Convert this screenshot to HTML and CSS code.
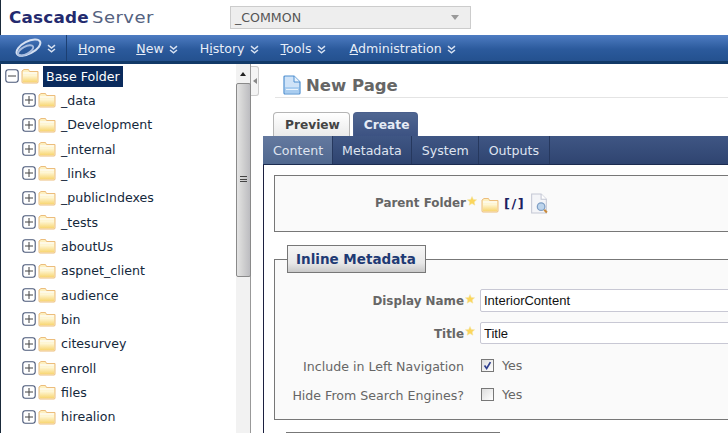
FILE: index.html
```html
<!DOCTYPE html>
<html lang="en">
<head>
<meta charset="utf-8">
<title>Cascade Server</title>
<link rel="stylesheet" href="styles.css">
</head>
<body>
<svg class="defs" width="0" height="0" aria-hidden="true">
  <defs>
    <linearGradient id="fg" x1="0" y1="0" x2="0" y2="1">
      <stop offset="0" stop-color="#fffbe4"/>
      <stop offset="1" stop-color="#f8d673"/>
    </linearGradient>
    <symbol id="folder" viewBox="0 0 18 16">
      <path d="M1 3 V14 a1 1 0 0 0 1 1 H16 a1 1 0 0 0 1-1 V3.5 H8.5 L7.5 1.5 H3 L1 3Z" fill="#fdf0c0" stroke="#ecbd7c" stroke-width="1"/>
      <path d="M2 6.5 H16 V14 H2Z" fill="url(#fg)"/>
      <path d="M2 5 H16" stroke="#fff" stroke-width="1.2"/>
    </symbol>
    <symbol id="plus" viewBox="0 0 14 14">
      <rect x=".8" y=".8" width="12.4" height="12.4" rx="2.5" fill="#fff" stroke="#4a5878" stroke-width="1.1"/>
      <path d="M3 7 H11 M7 3 V11" stroke="#444" stroke-width="1"/>
    </symbol>
    <symbol id="minus" viewBox="0 0 14 14">
      <rect x=".8" y=".8" width="12.4" height="12.4" rx="2.5" fill="#fff" stroke="#4a5878" stroke-width="1.1"/>
      <path d="M3 7 H11" stroke="#444" stroke-width="1"/>
    </symbol>
    <symbol id="star" viewBox="0 0 10 10">
      <path d="M5 .5 6.3 3.4 9.6 3.8 7.2 5.9 7.9 9.2 5 7.5 2.1 9.2 2.8 5.9 .4 3.8 3.7 3.4Z" fill="#fbd65c" stroke="#f3e2a0" stroke-width=".5"/>
    </symbol>
    <symbol id="chev" viewBox="0 0 9 9">
      <path d="M1 1.2 4.5 4 8 1.2 M1 5 4.5 7.8 8 5" fill="none" stroke="#d8e2f2" stroke-width="1.5"/>
    </symbol>
  </defs>
</svg>

<header class="top">
  <div class="logo"><span class="logo-a">Cascade</span><span class="logo-b">Server</span></div>
  <div class="site-select"><span>_COMMON</span><i class="select-arrow"></i></div>
</header>

<nav class="nav">
  <div class="nav-brand">
    <svg class="swirl" viewBox="0 0 30 22" aria-hidden="true">
      <ellipse cx="15.5" cy="10" rx="14" ry="6.5" transform="rotate(-28 15.5 10)" fill="none" stroke="#d6e1f2" stroke-width="2.2"/>
      <ellipse cx="12.5" cy="13" rx="9" ry="4" transform="rotate(-28 12.5 13)" fill="none" stroke="#a8bddf" stroke-width="2"/>
    </svg>
    <svg class="chev" aria-hidden="true"><use href="#chev"/></svg>
  </div>
  <a class="nav-item home"><u>H</u>ome</a>
  <a class="nav-item"><u>N</u>ew <svg class="chev" aria-hidden="true"><use href="#chev"/></svg></a>
  <a class="nav-item">H<u>i</u>story <svg class="chev" aria-hidden="true"><use href="#chev"/></svg></a>
  <a class="nav-item tools"><u>T</u>ools <svg class="chev" aria-hidden="true"><use href="#chev"/></svg></a>
  <a class="nav-item"><u>A</u>dministration <svg class="chev" aria-hidden="true"><use href="#chev"/></svg></a>
</nav>

<div class="main">
  <aside class="tree">
    <div class="row root"><svg class="box" aria-hidden="true"><use href="#minus"/></svg><svg class="folder" aria-hidden="true"><use href="#folder"/></svg><span class="name selected">Base Folder</span></div>
    <div class="row"><svg class="box" aria-hidden="true"><use href="#plus"/></svg><svg class="folder" aria-hidden="true"><use href="#folder"/></svg><span class="name">_data</span></div>
    <div class="row"><svg class="box" aria-hidden="true"><use href="#plus"/></svg><svg class="folder" aria-hidden="true"><use href="#folder"/></svg><span class="name">_Development</span></div>
    <div class="row"><svg class="box" aria-hidden="true"><use href="#plus"/></svg><svg class="folder" aria-hidden="true"><use href="#folder"/></svg><span class="name">_internal</span></div>
    <div class="row"><svg class="box" aria-hidden="true"><use href="#plus"/></svg><svg class="folder" aria-hidden="true"><use href="#folder"/></svg><span class="name">_links</span></div>
    <div class="row"><svg class="box" aria-hidden="true"><use href="#plus"/></svg><svg class="folder" aria-hidden="true"><use href="#folder"/></svg><span class="name">_publicIndexes</span></div>
    <div class="row"><svg class="box" aria-hidden="true"><use href="#plus"/></svg><svg class="folder" aria-hidden="true"><use href="#folder"/></svg><span class="name">_tests</span></div>
    <div class="row"><svg class="box" aria-hidden="true"><use href="#plus"/></svg><svg class="folder" aria-hidden="true"><use href="#folder"/></svg><span class="name">aboutUs</span></div>
    <div class="row"><svg class="box" aria-hidden="true"><use href="#plus"/></svg><svg class="folder" aria-hidden="true"><use href="#folder"/></svg><span class="name">aspnet_client</span></div>
    <div class="row"><svg class="box" aria-hidden="true"><use href="#plus"/></svg><svg class="folder" aria-hidden="true"><use href="#folder"/></svg><span class="name">audience</span></div>
    <div class="row"><svg class="box" aria-hidden="true"><use href="#plus"/></svg><svg class="folder" aria-hidden="true"><use href="#folder"/></svg><span class="name">bin</span></div>
    <div class="row"><svg class="box" aria-hidden="true"><use href="#plus"/></svg><svg class="folder" aria-hidden="true"><use href="#folder"/></svg><span class="name">citesurvey</span></div>
    <div class="row"><svg class="box" aria-hidden="true"><use href="#plus"/></svg><svg class="folder" aria-hidden="true"><use href="#folder"/></svg><span class="name">enroll</span></div>
    <div class="row"><svg class="box" aria-hidden="true"><use href="#plus"/></svg><svg class="folder" aria-hidden="true"><use href="#folder"/></svg><span class="name">files</span></div>
    <div class="row"><svg class="box" aria-hidden="true"><use href="#plus"/></svg><svg class="folder" aria-hidden="true"><use href="#folder"/></svg><span class="name">hirealion</span></div>
  </aside>

  <div class="scrollbar">
    <div class="sb-btn"><i class="sb-up"></i></div>
    <div class="sb-thumb"><i class="grip"></i></div>
  </div>

  <div class="splitter"><div class="handle"><i class="handle-arrow"></i></div></div>

  <section class="content">
    <div class="page-title">
      <svg class="page-icon" viewBox="0 0 18 20" aria-hidden="true">
        <path d="M1 2 a1 1 0 0 1 1-1 H11 L17 7 V18 a1 1 0 0 1-1 1 H2 a1 1 0 0 1-1-1Z" fill="#cfe3f8" stroke="#4f8fd0" stroke-width="1.2"/>
        <path d="M11 1 V7 H17" fill="#eaf3fc" stroke="#4f8fd0" stroke-width="1"/>
        <path d="M2 12 H16 V18 H2Z" fill="#a9cdf0"/>
        <path d="M3 14.5 H15" stroke="#eaf3fc"/>
      </svg>
      <h1>New Page</h1>
    </div>

    <div class="tabs">
      <a class="tab">Preview</a>
      <a class="tab active">Create</a>
    </div>

    <div class="subtabs">
      <a class="subtab on">Content</a>
      <a class="subtab">Metadata</a>
      <a class="subtab">System</a>
      <a class="subtab">Outputs</a>
    </div>

    <div class="panel">
      <div class="box-plain">
        <div class="pf-line">
          <span class="label strong">Parent Folder</span>
          <svg class="star" aria-hidden="true"><use href="#star"/></svg>
          <svg class="folder pf-folder" aria-hidden="true"><use href="#folder"/></svg>
          <span class="path">[/]</span>
          <svg class="browse" viewBox="0 0 18 20" aria-hidden="true">
            <path d="M2 1 H11 L16 6 V19 H2Z" fill="#f4f5f8" stroke="#c4c8d4"/>
            <path d="M11 1 V6 H16" fill="#fff" stroke="#c4c8d4"/>
            <circle cx="11" cy="13" r="3.6" fill="#bcd4ec" stroke="#7f9fc4" stroke-width="1.2"/>
            <path d="M14 16 16.5 18.5" stroke="#c98a3a" stroke-width="2"/>
          </svg>
        </div>
      </div>

      <div class="group">
        <div class="legend">Inline Metadata</div>
        <div class="form-row r1">
          <span class="label-cell"><span class="label strong">Display Name</span></span>
          <svg class="star" aria-hidden="true"><use href="#star"/></svg>
          <input class="field" type="text" value="InteriorContent">
        </div>
        <div class="form-row r2">
          <span class="label-cell"><span class="label strong">Title</span></span>
          <svg class="star" aria-hidden="true"><use href="#star"/></svg>
          <input class="field" type="text" value="Title">
        </div>
        <div class="form-row r3">
          <span class="label-cell"><span class="label">Include in Left Navigation</span></span>
          <span class="star-gap"></span>
          <span class="check checked"><svg viewBox="0 0 13 13" aria-hidden="true"><path d="M3 6.5 5.5 10 10 2.5" fill="none" stroke="#2f3f8f" stroke-width="2"/></svg></span>
          <span class="yes">Yes</span>
        </div>
        <div class="form-row r4">
          <span class="label-cell"><span class="label">Hide From Search Engines?</span></span>
          <span class="star-gap"></span>
          <span class="check"></span>
          <span class="yes">Yes</span>
        </div>
      </div>

      <div class="next-legend"></div>
    </div>
  </section>
</div>
</body>
</html>
```
FILE: styles.css
```css
* { box-sizing: border-box; }
html, body { margin: 0; height: 100%; overflow: hidden; }
body {
  width: 728px; height: 433px; background: #fff; color: #333;
  font-family: "DejaVu Sans", Verdana, sans-serif; font-size: 12.6px;
  display: flex; flex-direction: column;
}
.defs { display: block; height: 0; }
a { color: inherit; text-decoration: none; }

.top { height: 35px; flex: none; display: flex; align-items: center; padding: 0 0 0 9px; border-left: 1px solid #1a2a3a; }
.logo { width: 221px; white-space: nowrap; font-size: 15px; line-height: 18px; margin-left: -1px; padding-top: 1px; }
.logo-a { display: inline-block; font-weight: 700; color: #232a6e; letter-spacing: .2px; transform: scaleX(1.12); transform-origin: left center; }
.logo-b { display: inline-block; margin-left: 12px; color: #55627f; letter-spacing: .4px; transform: scaleX(1.2); transform-origin: left center; }
.site-select {
  width: 241px; height: 23px; background: #eee; border: 1px solid #ccc;
  display: flex; align-items: center; justify-content: space-between;
  padding: 0 11px 0 4px; color: #555; margin-top: -1px;
}
.select-arrow { width: 0; height: 0; border: 4.5px solid transparent; border-top: 5px solid #999; border-bottom: 0; }

.nav {
  height: 29px; flex: none; display: flex; align-items: center; color: #e8eef8;
  background: linear-gradient(#4e7cc2, #2b5a9c 55%, #24518f);
  border-bottom: 3px solid #123a68;
}
.nav-brand { width: 67px; height: 100%; display: flex; align-items: center; gap: 5px; padding-left: 14px; border-right: 1px solid #1c3f72; }
.swirl { width: 28px; height: 21px; flex: none; }
.chev { width: 9px; height: 9px; flex: none; }
.nav-item { margin: 1px 11px 0; white-space: nowrap; }
.nav-item.home { margin-right: 10px; }
.nav-item.tools { margin-right: 13px; }
.nav-item .chev { vertical-align: -1px; margin-left: 1px; }

.main { flex: 1; min-height: 0; display: flex; overflow: hidden; }

.tree { width: 236px; flex: none; padding: 0 0 0 3px; overflow: hidden; color: #14283c; border-left: 1px solid #1a2a3a; }
.row { height: 24.33px; display: flex; align-items: center; padding-left: 18px; }
.row.root { padding-left: 1px; }
.box { width: 14px; height: 14px; flex: none; }
.folder { width: 18px; height: 16px; flex: none; margin-left: 2px; }
.name { margin-left: 2px; padding: 0 3px; line-height: 21px; white-space: nowrap; }
.row.root .name { margin-left: 4px; }
.selected { background: #0a2a5c; color: #fff; }

.scrollbar { width: 15px; flex: none; background: #f2f2f2; display: flex; flex-direction: column; border-right: 1px solid #999; }
.sb-btn { height: 19px; display: flex; align-items: center; justify-content: center; }
.sb-up { width: 0; height: 0; border: 3.5px solid transparent; border-bottom: 4px solid #222; border-top: 0; }
.sb-thumb {
  height: 194px; border: 1px solid #8a8a8a; border-radius: 2px;
  background: linear-gradient(90deg, #e4e4e4, #d4d4d4 40%, #bcbcc0);
  display: flex; align-items: center; justify-content: center; margin: 0 -1px 0 0;
}
.grip { width: 7px; height: 8px; background: repeating-linear-gradient(#444 0 1px, transparent 1px 2.5px); }

.splitter { width: 12px; flex: none; padding-top: 1px; }
.handle { width: 8px; height: 30px; background: #f4f4f4; border: 1px solid #ccc; border-left: 0; border-radius: 0 3px 3px 0; display: flex; align-items: center; justify-content: center; margin-top: 1px; }
.handle-arrow { width: 0; height: 0; border: 3.5px solid transparent; border-right: 4px solid #888; border-left: 0; }

.content { flex: 1; min-width: 0; overflow: hidden; }
.page-title { margin-left: 12px; height: 34px; display: flex; align-items: center; gap: 5px; padding: 9px 0 0 8px; border-bottom: 1px solid #e4e4e4; }
.page-icon { width: 18px; height: 20px; flex: none; }
.page-title h1 { margin: 0; font-size: 16.5px; font-weight: 700; color: #666; }

.tabs { display: flex; gap: 3px; padding: 14px 0 0 10px; height: 38px; }
.tab {
  height: 24px; padding: 0 9px 0 11px; font-weight: 700; font-size: 12.2px; line-height: 24px; color: #444;
  border: 1px solid #b5b5b5; border-bottom: 0; border-radius: 4px 4px 0 0;
  background: linear-gradient(#fff, #eaeaea);
}
.tab.active { padding: 0 8px 0 10px; color: #e6ecf6; border-color: #4a5f8c; background: linear-gradient(#4f6691, #3c5282); }

.subtabs { height: 29px; display: flex; background: linear-gradient(#3f5684, #2f4470); border-bottom: 1px solid #1c2c50; color: #dfe4f0; }
.subtab { padding: 0 9.5px; line-height: 29px; border-right: 1px solid #26385e; }
.subtab.on { background: linear-gradient(#64799f, #50688f); padding: 0 8.5px 0 10px; }

.panel { border-left: 1px solid #1c2040; padding: 10px 0 0 10px; height: 300px; }
.box-plain { height: 57px; border: 1px solid #777; border-right: 0; background: #fafafa; padding-top: 17px; }
.pf-line { display: flex; align-items: center; height: 20px; padding-left: 100px; }
.label { color: #666; white-space: nowrap; }
.label.strong { font-weight: 700; font-size: 11.9px; }
.star { width: 10px; height: 10px; flex: none; margin: -4px 0 0 1px; }
.pf-folder { margin-left: 4px; margin-top: 3px; }
.path { color: #1a2060; font-weight: 700; margin-left: 5px; font-size: 13px; letter-spacing: 1.5px; }
.browse { width: 20px; height: 21px; margin-left: 4px; flex: none; }

.group { margin-top: 27px; height: 161px; border: 1px solid #777; border-right: 0; background: #fafafa; }
.legend {
  margin: -15px 0 0 12px; padding: 0 0 0 8px; height: 28px; line-height: 26px; font-weight: 700; font-size: 13.5px;
  color: #1f3a74; border: 1px solid #777; background: linear-gradient(#f6f6f6, #e8e8e8 65%, #c8c8c8); width: 139px; white-space: nowrap;
}
.form-row { display: flex; align-items: center; }
.label-cell { width: 189px; text-align: right; flex: none; }
.r1 { margin-top: 16px; height: 23px; }
.r2 { margin-top: 10px; height: 22px; }
.r3 { margin-top: 12px; height: 20px; }
.r4 { margin-top: 9px; height: 20px; }
.field { flex: none; width: 300px; height: 100%; margin: 0 0 0 5px; padding: 0 3px; border: 1px solid #c8c8d4; border-radius: 2px; background: #fff; color: #111; font: 13px "Liberation Sans", Arial, sans-serif; }
.star-gap { width: 11px; flex: none; }
.check { width: 13px; height: 13px; flex: none; margin: -2px 0 0 6px; border: 1px solid #777; background: linear-gradient(135deg, #ddd, #fff); display: block; }
.check svg { display: block; width: 11px; height: 11px; }
.yes { margin: -1px 0 0 8px; color: #666; }

.next-legend { margin: 12px 0 0 12px; width: 214px; height: 10px; border: 1px solid #777; border-bottom: 0; }
```
